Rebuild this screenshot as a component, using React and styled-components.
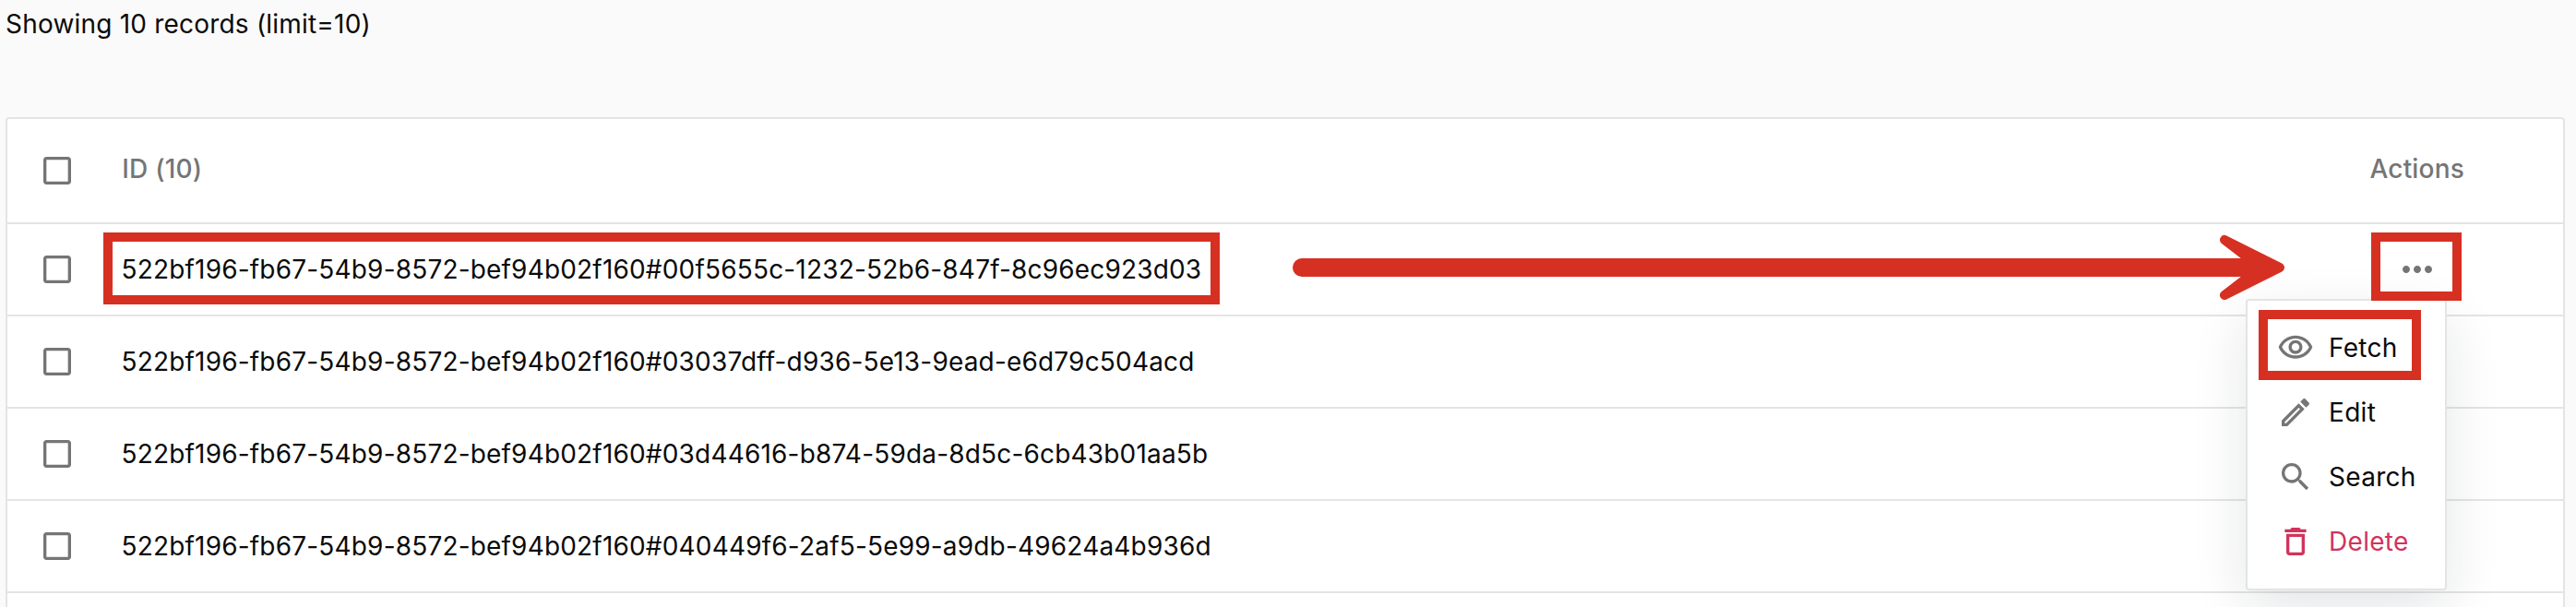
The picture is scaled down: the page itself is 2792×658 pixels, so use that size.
import React from 'react';
import styled, { createGlobalStyle } from 'styled-components';

const RED = '#d63022';

const GlobalStyle = createGlobalStyle`
  *, *::before, *::after { box-sizing: border-box; }
  html { overflow: hidden; background: #fafafa; }
  body {
    margin: 0;
    height: 658px;
    overflow: hidden;
    background: #fafafa;
    color: #0a0a0a;
    font-family: Inter, "Liberation Sans", sans-serif;
    font-size: 28px;
    line-height: 40px;
    letter-spacing: 0.18px;
  }
`;

const Page = styled.main`
  display: flex;
  flex-direction: column;
  height: 658px;
  padding: 6px 12px 0 6px;
  overflow: hidden;
`;

const Summary = styled.p`
  margin: 0 0 81px;
  letter-spacing: 0.2px;
  white-space: nowrap;
`;

const Table = styled.section`
  flex: none;
  display: flex;
  flex-direction: column;
  height: 720px;
  border: 2px solid #e4e4e4;
  border-radius: 4px;
  background: #fff;
`;

const Row = styled.div`
  position: relative;
  flex: none;
  display: flex;
  align-items: center;
  height: ${(p) => (p.$header ? 114 : 100)}px;
  padding-left: 34px;
  border-bottom: 2px solid #e4e4e4;
  white-space: nowrap;
`;

const CheckIcon = styled.svg`
  flex: none;
  width: 40px;
  height: 40px;
  fill: #757575;
`;

const IdCell = styled.div`
  flex: 1;
  padding-left: ${(p) => (p.$header ? 50.3 : 49.5)}px;
`;

const HeaderLabel = styled.span`
  display: block;
  padding-bottom: 5px;
  color: #757575;
  font-weight: 500;
`;

const ActionsCell = styled.div`
  display: flex;
  justify-content: ${(p) => (p.$header ? 'flex-start' : 'center')};
  width: ${(p) => (p.$header ? 209.5 : 316)}px;
`;

const MoreIcon = styled.svg`
  width: 48px;
  height: 48px;
  fill: #757575;
`;

const Menu = styled.div`
  position: absolute;
  z-index: 2;
  top: 81px;
  right: 126px;
  display: flex;
  flex-direction: column;
  width: 218px;
  height: 316px;
  padding: 16px 0;
  border: 2px solid #e4e4e4;
  border-radius: 4px;
  background: #fff;
  box-shadow: 0 20px 60px rgba(10, 24, 32, 0.11);
  letter-spacing: 0.3px;
`;

const MenuItem = styled.div`
  display: flex;
  align-items: center;
  gap: 16px;
  height: 70px;
  padding-left: 32px;
  color: ${(p) => (p.$danger ? '#d2335c' : '#0a0a0a')};

  svg {
    width: 40px;
    height: 40px;
    fill: ${(p) => (p.$danger ? '#d2335c' : '#757575')};
  }
`;

const Highlight = styled.div`
  position: absolute;
  z-index: 3;
  top: ${(p) => p.$top}px;
  left: ${(p) => p.$left}px;
  width: ${(p) => p.$width}px;
  height: ${(p) => p.$height}px;
  border: 10px solid ${RED};
`;

const Arrow = styled.svg`
  position: absolute;
  z-index: 3;
  top: 9px;
  left: 1393px;
  width: 1077px;
  height: 76px;
`;

const MENU = [
  {
    label: 'Fetch',
    path: 'M12 6c3.79 0 7.17 2.13 8.82 5.5C19.17 14.87 15.79 17 12 17s-7.17-2.13-8.82-5.5C4.83 8.13 8.21 6 12 6m0-2C7 4 2.73 7.11 1 11.5 2.73 15.89 7 19 12 19s9.27-3.11 11-7.5C21.27 7.11 17 4 12 4zm0 5c1.38 0 2.5 1.12 2.5 2.5S13.38 14 12 14s-2.5-1.12-2.5-2.5S10.62 9 12 9m0-2c-2.48 0-4.5 2.02-4.5 4.5S9.52 16 12 16s4.5-2.02 4.5-4.5S14.48 7 12 7z',
  },
  {
    label: 'Edit',
    path: 'M14.06 9.02l.92.92L5.92 19H5v-.92l9.06-9.06M17.66 3c-.25 0-.51.1-.7.29l-1.83 1.83 3.75 3.75 1.83-1.83c.39-.39.39-1.02 0-1.41l-2.34-2.34c-.2-.2-.45-.29-.71-.29zm-3.6 3.19L3 17.25V21h3.75L17.81 9.94l-3.75-3.75z',
  },
  {
    label: 'Search',
    path: 'M15.5 14h-.79l-.28-.27C15.41 12.59 16 11.11 16 9.5 16 5.91 13.09 3 9.5 3S3 5.91 3 9.5 5.91 16 9.5 16c1.61 0 3.09-.59 4.23-1.57l.27.28v.79l5 4.99L20.49 19l-4.99-5zm-6 0C7.01 14 5 11.99 5 9.5S7.01 5 9.5 5 14 7.01 14 9.5 11.99 14 9.5 14z',
  },
  {
    label: 'Delete',
    danger: true,
    path: 'M6 19c0 1.1.9 2 2 2h8c1.1 0 2-.9 2-2V7H6v12zM8 9h8v10H8V9zm7.5-5l-1-1h-5l-1 1H5v2h14V4z',
  },
];

const IDS = [
  '522bf196-fb67-54b9-8572-bef94b02f160#00f5655c-1232-52b6-847f-8c96ec923d03',
  '522bf196-fb67-54b9-8572-bef94b02f160#03037dff-d936-5e13-9ead-e6d79c504acd',
  '522bf196-fb67-54b9-8572-bef94b02f160#03d44616-b874-59da-8d5c-6cb43b01aa5b',
  '522bf196-fb67-54b9-8572-bef94b02f160#040449f6-2af5-5e99-a9db-49624a4b936d',
];

const Checkbox = () => (
  <CheckIcon viewBox="0 0 24 24">
    <path d="M19 5v14H5V5h14m0-2H5c-1.1 0-2 .9-2 2v14c0 1.1.9 2 2 2h14c1.1 0 2-.9 2-2V5c0-1.1-.9-2-2-2z" />
  </CheckIcon>
);

const RowMenu = () => (
  <Menu>
    {MENU.map((item) => (
      <MenuItem key={item.label} $danger={item.danger}>
        <svg viewBox="0 0 24 24">
          <path d={item.path} />
        </svg>
        {item.label}
      </MenuItem>
    ))}
  </Menu>
);

const Annotations = () => (
  <>
    <Highlight $left={104} $top={9} $width={1210} $height={78} />
    <Highlight $left={2562} $top={9} $width={98} $height={74} />
    <Highlight $left={2440} $top={93} $width={176} $height={76} />
    <Arrow viewBox="1401 252 1077 76">
      <path
        d="M1411 290H2450"
        stroke={RED}
        strokeWidth="20"
        strokeLinecap="round"
      />
      <path
        d="M2411 260L2471 290L2411 320L2450 290Z"
        fill={RED}
        stroke={RED}
        strokeWidth="10"
        strokeLinejoin="round"
      />
    </Arrow>
  </>
);

export default function App() {
  return (
    <>
      <GlobalStyle />
      <Page>
        <Summary>Showing 10 records (limit=10)</Summary>
        <Table>
          <Row $header>
            <Checkbox />
            <IdCell $header>
              <HeaderLabel>ID (10)</HeaderLabel>
            </IdCell>
            <ActionsCell $header>
              <HeaderLabel>Actions</HeaderLabel>
            </ActionsCell>
          </Row>
          {IDS.map((id, index) => (
            <Row key={id}>
              <Checkbox />
              <IdCell>{id}</IdCell>
              {index === 0 && (
                <>
                  <ActionsCell>
                    <MoreIcon viewBox="0 0 24 24">
                      <path d="M6 10c-1.1 0-2 .9-2 2s.9 2 2 2 2-.9 2-2-.9-2-2-2zm12 0c-1.1 0-2 .9-2 2s.9 2 2 2 2-.9 2-2-.9-2-2-2zm-6 0c-1.1 0-2 .9-2 2s.9 2 2 2 2-.9 2-2-.9-2-2-2z" />
                    </MoreIcon>
                  </ActionsCell>
                  <RowMenu />
                  <Annotations />
                </>
              )}
            </Row>
          ))}
        </Table>
      </Page>
    </>
  );
}
